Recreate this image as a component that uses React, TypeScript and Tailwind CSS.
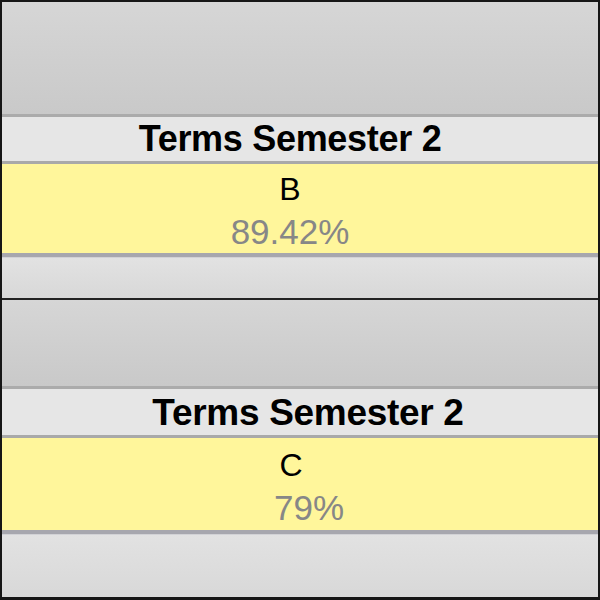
const FONT = "font-['Liberation_Sans',Arial,sans-serif]";

function GradeCell({
  topH,
  headerH,
  yellowH,
  bottomH,
  titleCls,
  yellowCls,
  gradeCls,
  percentCls,
  grade,
  percent,
  last,
}: {
  topH: string;
  headerH: string;
  yellowH: string;
  bottomH: string;
  titleCls: string;
  yellowCls: string;
  gradeCls: string;
  percentCls: string;
  grade: string;
  percent: string;
  last?: boolean;
}) {
  return (
    <div className={`flex flex-col ${last ? "flex-1" : ""}`}>
      <div className={`${topH} bg-gradient-to-b from-[#d6d6d6] to-[#c9c9c9]`} />
      <div className="h-[3px] bg-[#ababab]" />
      <div
        className={`${headerH} ${titleCls} flex items-center justify-center bg-[#e6e6e6] font-bold leading-none tracking-[-0.3px] text-black ${FONT}`}
      >
        Terms Semester 2
      </div>
      <div className="h-[3px] bg-[#a9a9a9]" />
      <div className={`${yellowH} ${yellowCls} flex flex-col items-center bg-[#fff69b] ${FONT}`}>
        <div className={`${gradeCls} text-[32px] leading-[44px] text-black`}>{grade}</div>
        <div className={`${percentCls} text-[35px] leading-[42px] text-[#878787]`}>{percent}</div>
      </div>
      <div className="flex h-[5px] flex-col">
        <div className="h-[4px] bg-[#a7a7ae]" />
        <div className="h-[1px] bg-[#d2d2d6]" />
      </div>
      <div
        className={`${bottomH} ${last ? "flex-1" : ""} bg-gradient-to-b from-[#e2e2e2] to-[#d8d8d8]`}
      />
    </div>
  );
}

export default function App() {
  return (
    <div className="box-border flex h-[600px] w-[600px] flex-col overflow-hidden border-x-2 border-t-2 border-b-[3px] border-[#161616]">
      <GradeCell
        topH="h-[112px]"
        headerH="h-[44px]"
        yellowH="h-[89px]"
        bottomH="h-[40px]"
        titleCls="pr-[20px] text-[36px]"
        yellowCls="pt-[3px]"
        gradeCls="mr-[20px]"
        percentCls="mr-[20px]"
        grade="B"
        percent="89.42%"
      />
      <div className="h-[2px] bg-[#222222]" />
      <GradeCell
        topH="h-[86px]"
        headerH="h-[46px]"
        yellowH="h-[92px]"
        bottomH=""
        titleCls="pl-[16px] text-[37px]"
        yellowCls="pt-[5px]"
        gradeCls="mr-[18px]"
        percentCls="ml-[18px]"
        grade="C"
        percent="79%"
        last
      />
    </div>
  );
}
